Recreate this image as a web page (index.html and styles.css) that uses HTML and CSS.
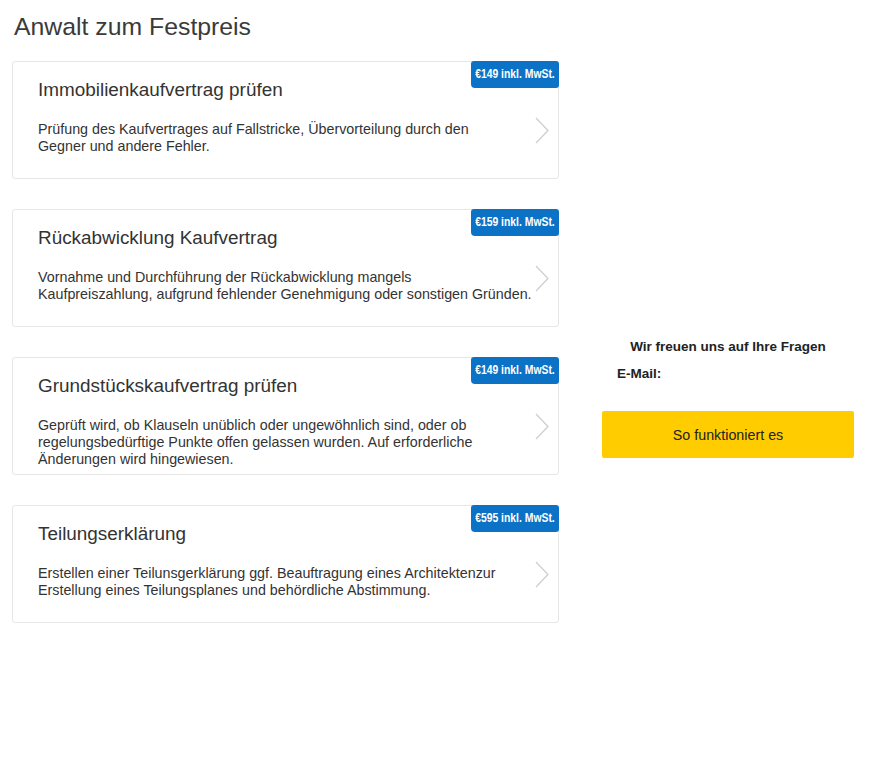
FILE: index.html
```html
<!DOCTYPE html>
<html lang="de">
<head>
<meta charset="utf-8">
<title>Anwalt zum Festpreis</title>
<link rel="stylesheet" href="styles.css">
</head>
<body>
<div class="page">
  <main class="left">
    <h1 class="page-title">Anwalt zum Festpreis</h1>
    <div class="cards">
      <a class="card" href="#">
        <div class="card-body">
          <h2 class="card-title">Immobilienkaufvertrag prüfen</h2>
          <p class="card-text">Prüfung des Kaufvertrages auf Fallstricke, Übervorteilung durch den<br>Gegner und andere Fehler.</p>
        </div>
        <svg class="chevron" width="14" height="27" viewBox="0 0 14 27"><path d="M1 1 L13 13.5 L1 26" fill="none" stroke="#cfcfcf" stroke-width="1.3"/></svg>
        <span class="badge"><span class="badge-text">€149 inkl. MwSt.</span></span>
      </a>
      <a class="card" href="#">
        <div class="card-body">
          <h2 class="card-title">Rückabwicklung Kaufvertrag</h2>
          <p class="card-text">Vornahme und Durchführung der Rückabwicklung mangels<br>Kaufpreiszahlung, aufgrund fehlender Genehmigung oder sonstigen Gründen.</p>
        </div>
        <svg class="chevron" width="14" height="27" viewBox="0 0 14 27"><path d="M1 1 L13 13.5 L1 26" fill="none" stroke="#cfcfcf" stroke-width="1.3"/></svg>
        <span class="badge"><span class="badge-text">€159 inkl. MwSt.</span></span>
      </a>
      <a class="card" href="#">
        <div class="card-body">
          <h2 class="card-title">Grundstückskaufvertrag prüfen</h2>
          <p class="card-text">Geprüft wird, ob Klauseln unüblich oder ungewöhnlich sind, oder ob<br>regelungsbedürftige Punkte offen gelassen wurden. Auf erforderliche<br>Änderungen wird hingewiesen.</p>
        </div>
        <svg class="chevron" width="14" height="27" viewBox="0 0 14 27"><path d="M1 1 L13 13.5 L1 26" fill="none" stroke="#cfcfcf" stroke-width="1.3"/></svg>
        <span class="badge"><span class="badge-text">€149 inkl. MwSt.</span></span>
      </a>
      <a class="card" href="#">
        <div class="card-body">
          <h2 class="card-title">Teilungserklärung</h2>
          <p class="card-text">Erstellen einer Teilunsgerklärung ggf. Beauftragung eines Architektenzur<br>Erstellung eines Teilungsplanes und behördliche Abstimmung.</p>
        </div>
        <svg class="chevron" width="14" height="27" viewBox="0 0 14 27"><path d="M1 1 L13 13.5 L1 26" fill="none" stroke="#cfcfcf" stroke-width="1.3"/></svg>
        <span class="badge"><span class="badge-text">€595 inkl. MwSt.</span></span>
      </a>
    </div>
  </main>
  <aside class="right">
    <p class="contact-title">Wir freuen uns auf Ihre Fragen</p>
    <p class="contact-mail">E-Mail:</p>
    <a class="cta" href="#">So funktioniert es</a>
  </aside>
</div>
</body>
</html>
```

FILE: styles.css
```css
html, body {
  margin: 0;
  padding: 0;
  background: #ffffff;
}
body {
  font-family: "Liberation Sans", Arial, Helvetica, sans-serif;
  color: #333333;
}
.page {
  display: flex;
  align-items: flex-start;
  padding-left: 12px;
}
.left {
  width: 547px;
  flex: none;
}
.page-title {
  margin: 0;
  padding: 12px 0 0 2px;
  font-size: 24.8px;
  line-height: 29px;
  font-weight: normal;
  color: #3a3a3a;
}
.cards {
  display: flex;
  flex-direction: column;
  gap: 30px;
  margin-top: 20px;
}
.card {
  position: relative;
  display: flex;
  align-items: flex-start;
  box-sizing: border-box;
  height: 118px;
  border: 1px solid #e6e6e6;
  border-radius: 3px;
  background: #ffffff;
  text-decoration: none;
  color: #333333;
}
.card-body {
  flex: 1;
  min-width: 0;
  padding: 17px 0 0 25px;
}
.card-title {
  margin: 0;
  font-size: 18.9px;
  line-height: 22px;
  font-weight: normal;
  color: #333333;
}
.card-text {
  margin: 20px 0 0;
  font-size: 14.3px;
  line-height: 17px;
  white-space: nowrap;
  color: #333333;
}
.chevron {
  flex: none;
  margin: 55px 9px 0 0;
}
.badge {
  position: absolute;
  top: -1px;
  right: -1px;
  width: 88px;
  height: 27px;
  box-sizing: border-box;
  display: flex;
  align-items: center;
  justify-content: center;
  padding-bottom: 1px;
  background: #0b72c6;
  color: #ffffff;
  font-size: 12.5px;
  font-weight: bold;
  white-space: nowrap;
  border-radius: 3px 3px 3px 4px;
}
.badge-text {
  display: inline-block;
  flex: none;
  transform: scaleX(0.83);
}
.right {
  width: 252px;
  flex: none;
  margin-left: 43px;
  padding-top: 338px;
}
.contact-title {
  margin: 0;
  text-align: center;
  font-size: 13.5px;
  line-height: 17px;
  font-weight: bold;
  color: #222222;
}
.contact-mail {
  margin: 10px 0 0 15px;
  font-size: 13.5px;
  line-height: 17px;
  font-weight: bold;
  color: #222222;
}
.cta {
  display: flex;
  align-items: center;
  justify-content: center;
  box-sizing: border-box;
  height: 47px;
  margin-top: 29px;
  background: #ffcc00;
  border-radius: 2px;
  color: #222222;
  font-size: 14.3px;
  text-decoration: none;
}
```
